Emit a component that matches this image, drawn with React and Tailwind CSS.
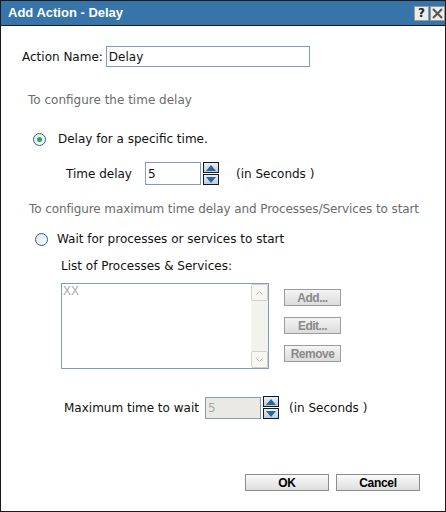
import React from "react";

const Spinner = () => (
  <div className="flex flex-col gap-[1px] ml-[2px]">
    <div className="w-[16px] h-[11px] border border-[#1a1a1a] bg-gradient-to-b from-[#e8f0f8] to-[#b9cde0] flex items-center justify-center">
      <svg width="10" height="6" viewBox="0 0 10 6">
        <path d="M0 6 L5 0 L10 6 Z" fill="#2e6496" />
      </svg>
    </div>
    <div className="w-[16px] h-[11px] border border-[#1a1a1a] bg-gradient-to-b from-[#e8f0f8] to-[#b9cde0] flex items-center justify-center">
      <svg width="10" height="6" viewBox="0 0 10 6">
        <path d="M0 0 L5 6 L10 0 Z" fill="#2e6496" />
      </svg>
    </div>
  </div>
);

const Radio = ({ checked }) => (
  <div className="w-[13px] h-[13px] rounded-full border border-[#2c5e8e] bg-gradient-to-br from-[#dfe5ea] to-white flex items-center justify-center">
    {checked && <div className="w-[5px] h-[5px] rounded-full bg-[#2fa84a]" />}
  </div>
);

const SideButton = ({ children }) => (
  <div className="w-[57px] h-[17px] border border-[#9c9c9c] bg-gradient-to-b from-[#f4f4f4] to-[#dcdcdc] flex items-center justify-center text-[12px] font-bold text-[#8a8a8a] font-['Liberation_Sans',Arial,sans-serif] tracking-[-0.5px]">
    {children}
  </div>
);

const MainButton = ({ children }) => (
  <div className="w-[84px] h-[17px] border border-[#8c8c8c] bg-gradient-to-b from-[#fafafa] to-[#dedede] flex items-center justify-center text-[12px] font-bold text-black font-['Liberation_Sans',Arial,sans-serif] tracking-[-0.3px]">
    {children}
  </div>
);

export default function App() {
  return (
    <div className="w-[446px] h-[512px] bg-white border border-[#1a1a1a] flex flex-col font-['DejaVu_Sans',Verdana,sans-serif] text-[11px] text-[#111]">
      <div className="h-[25px] shrink-0 bg-[#3674a9] border-b border-[#1a1a1a] flex items-center justify-between pl-[7px]">
        <span className="text-white font-bold text-[13px] font-['Liberation_Sans',Arial,sans-serif]">Add Action - Delay</span>
        <div className="flex gap-[1px] items-center">
          <div className="w-[15px] h-[15px] bg-[#ececec] border border-[#9a9a9a] flex items-center justify-center text-[12px] font-bold text-[#222] leading-none">?</div>
          <div className="w-[15px] h-[15px] bg-[#ececec] border border-[#9a9a9a] flex items-center justify-center">
            <svg width="11" height="11" viewBox="0 0 11 11">
              <path d="M1 1 L10 10 M10 1 L1 10" stroke="#555" strokeWidth="2" />
            </svg>
          </div>
        </div>
      </div>

      <div className="flex flex-col">
        <div className="flex items-center h-[21px] mt-[20px] pl-[21px]">
          <span className="text-[12px]">Action Name:</span>
          <div className="ml-[3px] w-[204px] h-[21px] border border-[#7f9db9] flex items-center pl-[2px] text-[12px]">Delay</div>
        </div>

        <div className="h-[16px] mt-[25px] pl-[27px] flex items-center text-[#6b6b6b] text-[12px]">To configure the time delay</div>

        <div className="h-[16px] mt-[23px] pl-[32px] flex items-center gap-[12px]">
          <Radio checked />
          <span className="text-[12px]">Delay for a specific time.</span>
        </div>

        <div className="h-[23px] mt-[15px] pl-[65px] flex items-center">
          <span className="text-[12px] w-[79px]">Time delay</span>
          <div className="w-[56px] h-[23px] border border-[#7f9db9] flex items-center pl-[2px] text-[12px]">5</div>
          <Spinner />
          <span className="ml-[17px] text-[12px]">(in Seconds )</span>
        </div>

        <div className="h-[16px] mt-[16px] pl-[28px] flex items-center text-[#6b6b6b] text-[12px] tracking-[-0.1px]">To configure maximum time delay and Processes/Services to start</div>

        <div className="h-[16px] mt-[14px] pl-[34px] flex items-center gap-[9px]">
          <Radio />
          <span className="text-[12px]">Wait for processes or services to start</span>
        </div>

        <div className="h-[16px] mt-[11px] pl-[60px] flex items-center text-[12px]">List of Processes &amp; Services:</div>

        <div className="mt-[9px] pl-[60px] flex">
          <div className="w-[208px] h-[86px] border border-[#7f9db9] flex">
            <div className="flex-1 text-[12px] text-[#a8a8a8] font-['Liberation_Sans',Arial,sans-serif] pl-[1px] pt-[1px] leading-none">XX</div>
            <div className="w-[17px] bg-[#f3f3ee] flex flex-col justify-between">
              <div className="h-[17px] border border-[#d4d2c8] rounded-[2px] bg-[#f6f6f3] flex items-center justify-center">
                <svg width="7" height="4" viewBox="0 0 7 4"><path d="M0.5 3.5 L3.5 0.5 L6.5 3.5" stroke="#b8b8b8" fill="none" /></svg>
              </div>
              <div className="h-[17px] border border-[#d4d2c8] rounded-[2px] bg-[#f6f6f3] flex items-center justify-center">
                <svg width="7" height="4" viewBox="0 0 7 4"><path d="M0.5 0.5 L3.5 3.5 L6.5 0.5" stroke="#b8b8b8" fill="none" /></svg>
              </div>
            </div>
          </div>
          <div className="ml-[15px] mt-[6px] flex flex-col gap-[11px]">
            <SideButton>Add...</SideButton>
            <SideButton>Edit...</SideButton>
            <SideButton>Remove</SideButton>
          </div>
        </div>

        <div className="h-[23px] mt-[27px] pl-[63px] flex items-center">
          <span className="text-[12px] w-[141px]">Maximum time to wait</span>
          <div className="w-[56px] h-[22px] border border-[#7f9db9] bg-[#ebe9e3] flex items-center pl-[2px] text-[12px] text-[#a8a8a8]">5</div>
          <Spinner />
          <span className="ml-[10px] text-[12px]">(in Seconds )</span>
        </div>

        <div className="mt-[55px] pl-[244px] flex gap-[7px]">
          <MainButton>OK</MainButton>
          <MainButton>Cancel</MainButton>
        </div>
      </div>
    </div>
  );
}
